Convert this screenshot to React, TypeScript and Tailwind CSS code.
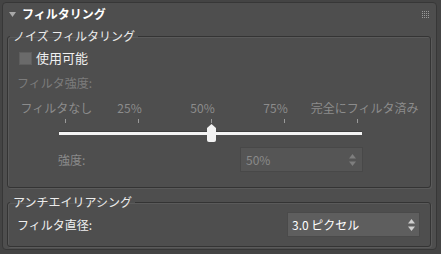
import React from "react";

const ticks = ["フィルタなし", "25%", "50%", "75%", "完全にフィルタ済み"];

function Arrows({ color }: { color: string }) {
  return (
    <svg width="7" height="12" viewBox="0 0 7 12" className={color}>
      <path d="M3.5 0 L7 4.5 H0 Z" fill="currentColor" />
      <path d="M3.5 12 L7 7.5 H0 Z" fill="currentColor" />
    </svg>
  );
}

function Group({ title, children, className }: { title: string; children: React.ReactNode; className?: string }) {
  return (
    <fieldset
      className={
        "ml-[4px] w-[424px] rounded-[3px] border border-[#343434] shadow-[1px_1px_0_#5a5a5a,inset_1px_1px_0_#5a5a5a] " +
        (className ?? "")
      }
    >
      <legend className="ml-[2px] px-[3px] text-[12px] leading-[14px] text-[#ececec]">{title}</legend>
      {children}
    </fieldset>
  );
}

export default function App() {
  return (
    <div className="w-[441px] h-[254px] bg-[#444444] pt-[2px] pl-[2px] font-['Noto_Sans_CJK_JP',sans-serif] text-[12px] leading-[14px]">
      <div className="w-[435px] h-[248px] rounded-[4px] border border-[#373737] bg-[#4e4e4e] flex flex-col">
        {/* Header */}
        <div className="h-[22px] flex items-center pl-[6px] pr-[7px]">
          <svg width="7" height="5" viewBox="0 0 7 5" className="text-[#a8a8a8]">
            <path d="M0 0 H7 L3.5 5 Z" fill="currentColor" />
          </svg>
          <span className="ml-[6px] font-bold text-[12px] text-white">フィルタリング</span>
          <div className="ml-auto grid grid-cols-4 gap-[1px]">
            {Array.from({ length: 16 }).map((_, i) => (
              <span key={i} className="w-[1px] h-[1px] bg-[#9a9a9a]" />
            ))}
          </div>
        </div>

        {/* Noise filtering */}
        <Group title="ノイズ フィルタリング" className="mt-[4px] pb-[15px]">
          <div className="mt-[8px] h-[14px] flex items-center pl-[11px]">
            <span className="shrink-0 w-[13px] h-[13px] bg-[#6a6a6a] border border-[#5e5e5e]" />
            <span className="ml-[4px] text-[13px] text-[#f0f0f0]">使用可能</span>
          </div>
          <div className="mt-[11px] h-[14px] pl-[9px] text-[#7c7c7c]">フィルタ強度:</div>
          <div className="mt-[11px] h-[14px] flex pl-[12px] text-[#8c8c8c]">
            {ticks.map((t, i) => (
              <div
                key={t}
                className={"w-[73px] flex justify-center whitespace-nowrap " + (i === 4 ? "ml-[16px]" : "")}
              >
                {t}
              </div>
            ))}
          </div>
          <div className="mt-[4px] h-[4px] flex pl-[21px]">
            {ticks.map((t) => (
              <div key={t} className="w-[73px] flex justify-center">
                <span className="w-[1px] h-[4px] bg-[#9a9a9a]" />
              </div>
            ))}
          </div>
          <div className="relative h-[20px] pt-[8px] ml-[51px] w-[303px]">
            <div className="h-[4px] border-t border-[#3e3e3e] bg-[#f4f4f4]" />
            <svg width="9" height="18" viewBox="0 0 9 18" className="absolute left-[148px] top-[1px]">
              <path d="M4.5 0 L9 4 V16 Q9 18 7 18 H2 Q0 18 0 16 V4 Z" fill="#f2f2f2" />
            </svg>
          </div>
          <div className="mt-[4px] h-[25px] flex items-center">
            <span className="ml-[50px] text-[#8a8a8a]">強度:</span>
            <div className="ml-auto mr-[67px] w-[123px] h-[25px] bg-[#555555] border border-[#484848] flex items-center pl-[5px] pr-[6px] text-[#8a8a8a]">
              <span>50%</span>
              <span className="ml-auto flex">
                <Arrows color="text-[#7e7e7e]" />
              </span>
            </div>
          </div>
        </Group>

        {/* Antialiasing */}
        <Group title="アンチエイリアシング" className="mt-[7px] pb-[9px]">
          <div className="mt-[3px] h-[25px] flex items-center">
            <span className="ml-[9px] text-[#f0f0f0]">フィルタ直径:</span>
            <div className="ml-auto mr-[10px] w-[133px] h-[25px] bg-[#5e5e5e] border border-[#4a4a4a] flex items-center pl-[4px] pr-[4px] text-white">
              <span>3.0 ピクセル</span>
              <span className="ml-auto flex">
                <Arrows color="text-[#cfcfcf]" />
              </span>
            </div>
          </div>
        </Group>
      </div>
    </div>
  );
}
